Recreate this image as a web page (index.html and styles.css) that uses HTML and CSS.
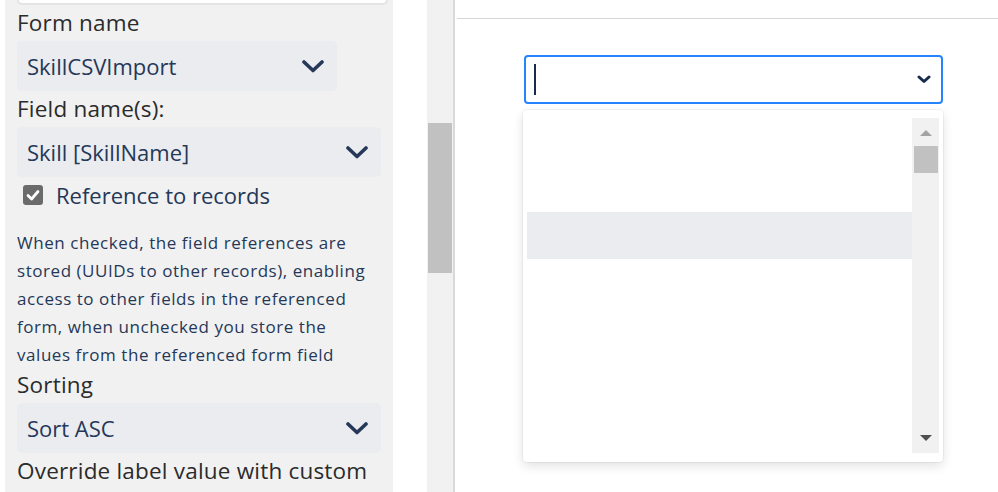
FILE: index.html
```
<!DOCTYPE html>
<html lang="en">
<head>
<meta charset="utf-8">
<title>Form settings</title>
<link rel="stylesheet" href="styles.css">
</head>
<body>
<div class="page">
  <div class="edge"></div>
  <aside class="panel">
    <div class="top-input"></div>
    <div class="label">Form name</div>
    <div class="select select-narrow">
      <span class="select-value">SkillCSVImport</span>
      <svg class="chev" width="22" height="13" viewBox="0 0 22 13"><polyline points="2,2 11,10.5 20,2" fill="none" stroke="#253858" stroke-width="3.6" stroke-linecap="round" stroke-linejoin="round"/></svg>
    </div>
    <div class="label">Field name(s):</div>
    <div class="select">
      <span class="select-value">Skill [SkillName]</span>
      <svg class="chev" width="22" height="13" viewBox="0 0 22 13"><polyline points="2,2 11,10.5 20,2" fill="none" stroke="#253858" stroke-width="3.6" stroke-linecap="round" stroke-linejoin="round"/></svg>
    </div>
    <div class="check-row">
      <span class="checkbox">
        <svg width="20" height="20" viewBox="0 0 20 20"><polyline points="5,10.5 8.6,14 15,6.5" fill="none" stroke="#fff" stroke-width="2.8" stroke-linecap="round" stroke-linejoin="round"/></svg>
      </span>
      <span class="check-label">Reference to records</span>
    </div>
    <p class="desc">When checked, the field references are stored (UUIDs to other records), enabling access to other fields in the referenced form, when unchecked you store the values from the referenced form field</p>
    <div class="label label-tight">Sorting</div>
    <div class="select">
      <span class="select-value">Sort ASC</span>
      <svg class="chev" width="22" height="13" viewBox="0 0 22 13"><polyline points="2,2 11,10.5 20,2" fill="none" stroke="#253858" stroke-width="3.6" stroke-linecap="round" stroke-linejoin="round"/></svg>
    </div>
    <div class="label">Override label value with custom</div>
  </aside>
  <div class="gap"></div>
  <div class="page-scroll"><div class="page-thumb"></div></div>
  <main class="main">
    <div class="topbar"></div>
    <div class="combo">
      <div class="combo-input">
        <span class="caret"></span>
        <svg class="combo-chev" width="14" height="9" viewBox="0 0 14 9"><polyline points="2,2 7,6.5 12,2" fill="none" stroke="#172b4d" stroke-width="3" stroke-linecap="round" stroke-linejoin="round"/></svg>
      </div>
      <div class="menu">
        <div class="options">
          <div class="option"></div>
          <div class="option"></div>
          <div class="option option-focus"></div>
          <div class="option"></div>
          <div class="option"></div>
          <div class="option"></div>
          <div class="option"></div>
        </div>
        <div class="menu-scroll">
          <span class="arrow arrow-up"></span>
          <div class="menu-thumb"></div>
          <div class="menu-track"></div>
          <span class="arrow arrow-down"></span>
        </div>
      </div>
    </div>
  </main>
</div>
</body>
</html>
```
FILE: styles.css
```
html, body {
  margin: 0;
  padding: 0;
  background: #fff;
}
body {
  font-family: "Open Sans", "Noto Sans", sans-serif;
  width: 998px;
  height: 492px;
  overflow: hidden;
}
.page {
  display: flex;
  height: 492px;
  overflow: hidden;
}
.edge {
  width: 5px;
  flex: none;
  background: #fff;
}
.panel {
  width: 388px;
  flex: none;
  background: #f1f1f1;
  padding-left: 12px;
  box-sizing: border-box;
  overflow: hidden;
  display: flex;
  flex-direction: column;
  align-items: flex-start;
}
.top-input {
  width: 371px;
  height: 5px;
  flex: none;
  background: #fff;
  border: 2px solid #e4e4e4;
  border-top: none;
  border-radius: 0 0 5px 5px;
  box-sizing: border-box;
}
.label {
  font-size: 22.5px;
  letter-spacing: 0.2px;
  line-height: 36px;
  color: #2b2b2b;
  white-space: nowrap;
  flex: none;
}
.label-tight {
  margin-top: -2px;
}
.select {
  width: 364px;
  height: 50px;
  flex: none;
  background: #ebecf0;
  border-radius: 5px;
  box-sizing: border-box;
  padding: 0 13px 0 10px;
  display: flex;
  align-items: center;
  justify-content: space-between;
}
.select-narrow {
  width: 320px;
}
.select-value {
  font-size: 22px;
  color: #253858;
  white-space: nowrap;
}
.chev {
  display: block;
  flex: none;
}
.check-row {
  height: 36px;
  flex: none;
  display: flex;
  align-items: center;
  padding-left: 6px;
  gap: 13px;
}
.checkbox {
  width: 20px;
  height: 20px;
  border-radius: 3px;
  background: #6b6b6b;
  display: block;
  flex: none;
}
.checkbox svg {
  display: block;
}
.check-label {
  font-size: 22px;
  color: #253858;
  white-space: nowrap;
}
.desc {
  margin: 16px 0 0;
  width: 364px;
  font-size: 17px;
  letter-spacing: 0.55px;
  line-height: 28px;
  color: #253858;
  flex: none;
}
.gap {
  width: 34px;
  flex: none;
  background: #fff;
}
.page-scroll {
  width: 26px;
  flex: none;
  background: #f1f1f1;
  padding: 123px 1px 0;
  box-sizing: border-box;
}
.page-thumb {
  height: 150px;
  background: #c1c1c1;
}
.main {
  flex: 1;
  border-left: 2px solid #d9d9d9;
  display: flex;
  flex-direction: column;
}
.topbar {
  height: 18px;
  border-bottom: 1px solid #d6d6d6;
  margin-left: 2px;
  flex: none;
}
.combo {
  margin: 36px 0 0 68px;
  width: 420px;
  display: flex;
  flex-direction: column;
}
.combo-input {
  margin-left: 1px;
  height: 49px;
  border: 2px solid #2684ff;
  border-radius: 4px;
  box-sizing: border-box;
  display: flex;
  align-items: center;
  justify-content: space-between;
  padding: 0 10px 0 8px;
  background: #fff;
}
.caret {
  width: 1.5px;
  height: 31px;
  background: #172b4d;
  display: block;
}
.combo-chev {
  display: block;
}
.menu {
  margin-top: 6px;
  height: 352px;
  background: #fff;
  border-radius: 4px;
  box-shadow: 0 0 0 1px rgba(0,0,0,0.04), 0 4px 11px rgba(0,0,0,0.12);
  box-sizing: border-box;
  padding: 8px 4px 9px 4px;
  display: flex;
}
.options {
  flex: 1;
  overflow: hidden;
}
.option {
  height: 47px;
}
.option-focus {
  background: #ebecf0;
}
.menu-scroll {
  width: 27px;
  flex: none;
  background: #f1f1f1;
  display: flex;
  flex-direction: column;
  align-items: center;
}
.arrow {
  width: 0;
  height: 0;
  border-left: 6px solid transparent;
  border-right: 6px solid transparent;
  flex: none;
}
.arrow-up {
  margin-top: 12px;
  border-bottom: 6px solid #a3a3a3;
}
.arrow-down {
  margin-bottom: 12px;
  border-top: 6px solid #505050;
}
.menu-thumb {
  margin-top: 10px;
  width: 24px;
  height: 27px;
  background: #c1c1c1;
  flex: none;
}
.menu-track {
  flex: 1;
}
```
